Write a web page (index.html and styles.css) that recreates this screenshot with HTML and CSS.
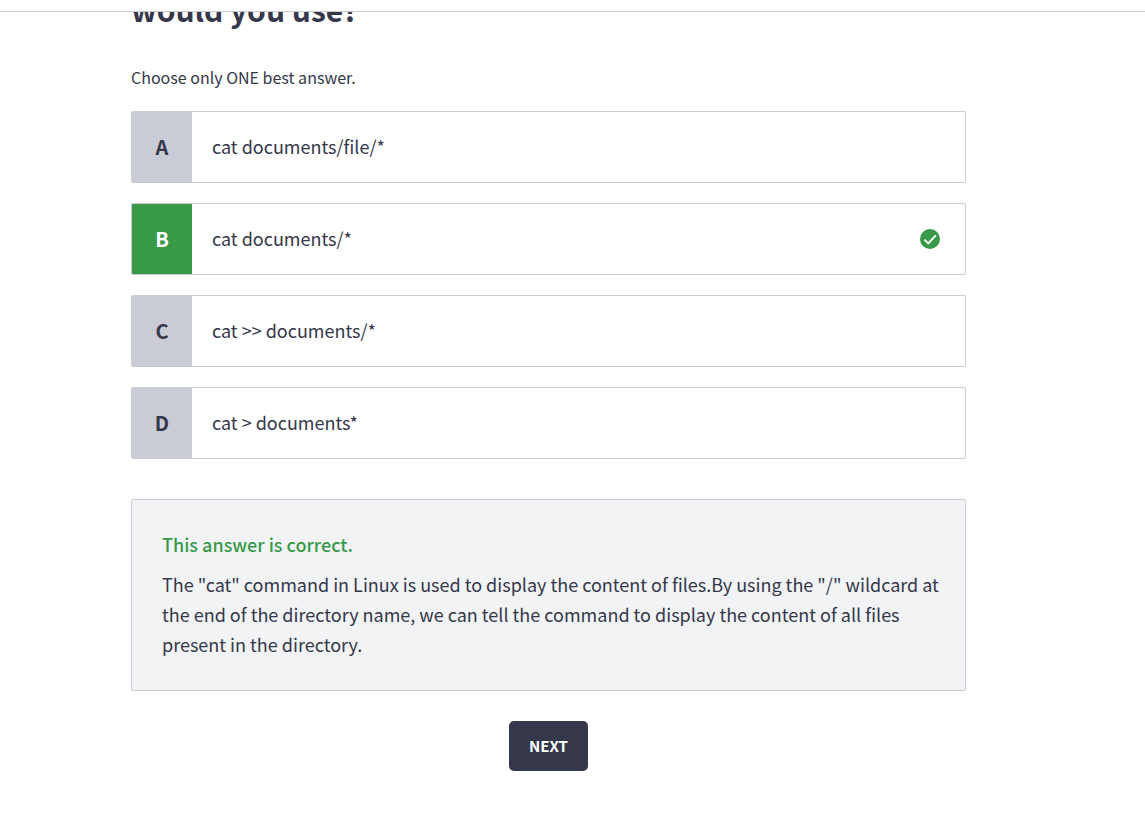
FILE: index.html
```html
<!DOCTYPE html>
<html lang="en">
<head>
<meta charset="utf-8">
<meta name="viewport" content="width=device-width, initial-scale=1">
<title>Quiz</title>
<link rel="stylesheet" href="styles.css">
</head>
<body>
<header class="topbar"></header>
<main class="quiz">
  <h1 class="question">would you use?</h1>
  <p class="hint">Choose only ONE best answer.</p>
  <div class="answers">
    <button type="button" class="answer">
      <span class="letter">A</span>
      <span class="text">cat documents/file/*</span>
    </button>
    <button type="button" class="answer correct" aria-pressed="true">
      <span class="letter">B</span>
      <span class="text">cat documents/*</span>
      <svg class="check" viewBox="0 0 20 20" aria-hidden="true">
        <circle cx="10" cy="10" r="10" fill="#389a48"/>
        <path d="M4.4 10.6 8.2 14.4 15.8 6.4" fill="none" stroke="#fff" stroke-width="1.8"/>
      </svg>
    </button>
    <button type="button" class="answer">
      <span class="letter">C</span>
      <span class="text">cat &gt;&gt; documents/*</span>
    </button>
    <button type="button" class="answer">
      <span class="letter">D</span>
      <span class="text">cat &gt; documents*</span>
    </button>
  </div>
  <section class="feedback">
    <h2 class="verdict">This answer is correct.</h2>
    <p class="explanation">The "cat" command in Linux is used to display the content of files.By using the "/" wildcard at the end of the directory name, we can tell the command to display the content of all files present in the directory.</p>
  </section>
  <button type="button" class="next">NEXT</button>
</main>
</body>
</html>
```
FILE: styles.css
```css
* {
  box-sizing: border-box;
}

body {
  margin: 0;
  background: #fff;
  color: #35374a;
  font-family: "Noto Sans CJK SC", "Noto Sans", sans-serif;
  font-size: 18px;
  line-height: 30px;
}

button {
  font: inherit;
  color: inherit;
  cursor: pointer;
}

.topbar {
  position: relative;
  z-index: 1;
  height: 12px;
  background: #fff;
  border-bottom: 1px solid #c9cbd5;
}

.quiz {
  display: flex;
  flex-direction: column;
  padding: 0 179px 40px 131px;
}

.question {
  margin: -27px 0 32px;
  font-size: 30px;
  line-height: 48px;
}

.hint {
  margin: 0 0 22px;
  font-size: 16px;
  line-height: 24px;
}

.answers {
  display: flex;
  flex-direction: column;
  gap: 20px;
}

.answer {
  display: flex;
  align-items: center;
  min-height: 72px;
  padding: 0 25px 0 0;
  background: #fff;
  border: 1px solid #c9cbd5;
  border-radius: 2px;
  text-align: left;
}

.letter {
  display: flex;
  align-items: center;
  justify-content: center;
  align-self: stretch;
  flex: 0 0 60px;
  background: #c9cbd5;
  font-size: 20px;
  font-weight: bold;
}

.correct .letter {
  background: #389a48;
  color: #fff;
}

.text {
  flex: 1;
  padding: 0 20px 2px;
}

.check {
  width: 20px;
  height: 20px;
}

.feedback {
  margin-top: 40px;
  padding: 29px 20px 31px 30px;
  background: #f1f3f5;
  border: 1px solid #c9cbd5;
  border-radius: 2px;
}

.verdict {
  margin: 0 0 10px;
  color: #389a48;
  font-size: 18px;
  font-weight: 500;
  line-height: 30px;
}

.explanation {
  margin: 0;
}

.next {
  align-self: center;
  min-height: 50px;
  margin-top: 30px;
  padding: 0 20px;
  background: #35374a;
  border: 0;
  border-radius: 5px;
  color: #fff;
  font-size: 15px;
  font-weight: bold;
}
```
